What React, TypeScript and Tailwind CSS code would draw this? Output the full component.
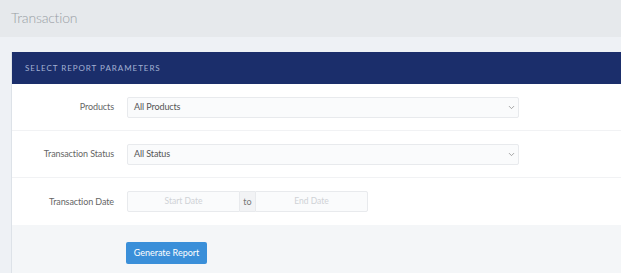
import { ChevronDown } from "lucide-react";

const font = { fontFamily: '"Lato", "Liberation Sans", sans-serif' };

function Row({ label, children, last }: { label: string; children: React.ReactNode; last?: boolean }) {
  return (
    <div className={`flex h-[47px] items-center ${last ? "" : "border-b border-[#f1f2f4]"}`}>
      <div className="w-[103px] pr-[1px] text-right text-[9px] tracking-[-0.1px] text-[#666]">{label}</div>
      <div className="ml-[12px] flex">{children}</div>
    </div>
  );
}

function Select({ value }: { value: string }) {
  return (
    <div className="flex h-[21px] w-[392px] items-center justify-between rounded-[2px] border border-[#e8eaed] bg-[#fafbfc] pl-[6px] pr-[2px] text-[9px] tracking-[-0.1px] text-[#555]">
      <span>{value}</span>
      <ChevronDown className="h-[9px] w-[9px] text-[#888]" strokeWidth={2} />
    </div>
  );
}

export default function App() {
  return (
    <div className="h-[273px] w-[621px] overflow-hidden bg-[#eef1f5]" style={font}>
      <div className="flex h-[37px] items-center bg-[#e6e9ec] pb-[3px] pl-[11px]">
        <h1 className="text-[14px] font-light tracking-[-0.2px] text-[#999ea4]">Transaction</h1>
      </div>
      <div className="ml-[11px] mt-[15px] w-[630px] border-l border-[#dde2e8] bg-white">
        <div className="flex h-[32px] items-center bg-[#1b2e6b] pl-[13px] text-[8px] tracking-[0.12em] text-[#a3b1d3]">
          SELECT REPORT PARAMETERS
        </div>
        <Row label="Products">
          <Select value="All Products" />
        </Row>
        <Row label="Transaction Status">
          <Select value="All Status" />
        </Row>
        <Row label="Transaction Date" last>
          <div className="flex h-[21px] text-[8.5px]">
            <div className="flex w-[113px] items-center justify-center rounded-l-[2px] border border-[#e8eaed] bg-[#fafbfc] text-[#cfd2d6]">
              Start Date
            </div>
            <div className="flex w-[15px] items-center justify-center border-y border-[#e8eaed] bg-[#f2f3f5] text-[9px] text-[#777]">
              to
            </div>
            <div className="flex w-[113px] items-center justify-center rounded-r-[2px] border border-[#e8eaed] bg-[#fafbfc] text-[#cfd2d6]">
              End Date
            </div>
          </div>
        </Row>
        <div className="h-[60px] bg-[#f4f6f8] pl-[114px] pt-[13px]">
          <button className="h-[22px] w-[81px] rounded-[2px] bg-[#3a8fd9] text-[9px] text-white">
            Generate Report
          </button>
        </div>
      </div>
    </div>
  );
}
